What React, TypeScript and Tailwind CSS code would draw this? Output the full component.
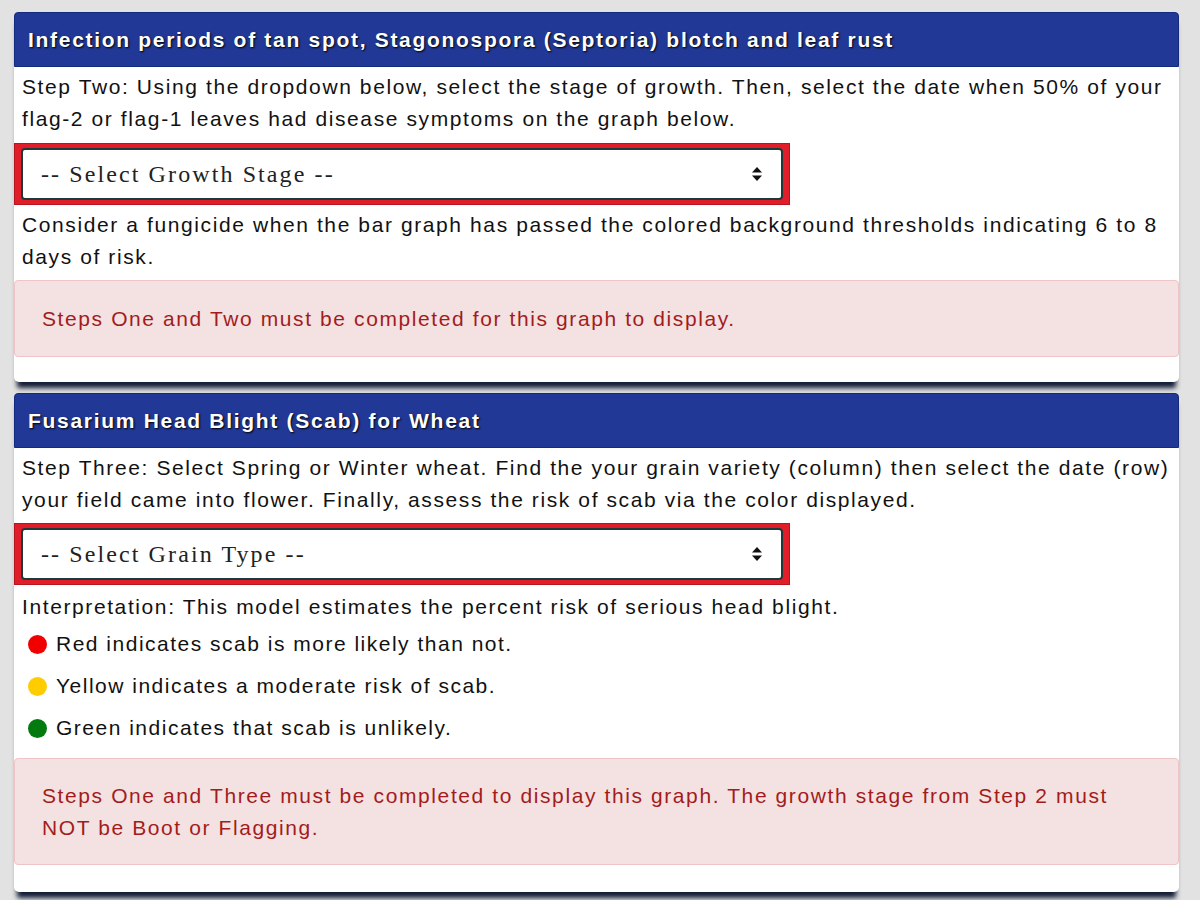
import React from "react";

function Arrows() {
  return (
    <svg width="12" height="16" viewBox="0 0 12 16" className="shrink-0">
      <path d="M6 1 L11 6.5 L1 6.5 Z" fill="#111" />
      <path d="M6 15 L11 9.5 L1 9.5 Z" fill="#111" />
    </svg>
  );
}

function SelectBox({ label }: { label: string }) {
  return (
    <div className="w-[776px] h-[62px] bg-[#e21d2a] border border-[#b5161f] px-[6px] py-[4px]">
      <div className="h-full bg-white border-2 border-[#1d3a3a] rounded-[4px] flex items-center justify-between pl-[18px] pr-[18px]">
        <span className="text-[24px] tracking-[2.1px] text-[#222] font-['Liberation_Serif',serif]">{label}</span>
        <Arrows />
      </div>
    </div>
  );
}

function Header({ title }: { title: string }) {
  return (
    <div className="h-[55px] bg-[#213896] border border-[#142a7e] rounded-t-[4px] flex items-center px-[13px]">
      <span className="text-white font-bold text-[21px] tracking-[1.7px] [text-shadow:1px_1px_2px_#000]">{title}</span>
    </div>
  );
}

function Alert({ children, h }: { children: React.ReactNode; h: string }) {
  return (
    <div className={`${h} bg-[#f4e1e2] border border-[#efc4c6] rounded-[4px] flex items-center px-[27px] text-[#a31c1c] text-[21px] tracking-[1.6px] leading-[32px]`}>
      <div className="max-w-[1115px]">{children}</div>
    </div>
  );
}

function Dot({ color }: { color: string }) {
  return <span className={`inline-block w-[19px] h-[19px] rounded-full ${color} mr-[9px] shrink-0`} />;
}

const bodyText = "text-[21px] leading-[32px] tracking-[1.6px]";

export default function App() {
  return (
    <div className="w-[1200px] h-[900px] bg-[#e2e2e2] overflow-hidden pt-[12px] font-['Liberation_Sans',Arial,sans-serif] text-[#111]">
      <div className="ml-[14px] w-[1165px] bg-white rounded-[5px] shadow-[0_9px_5px_-3px_rgba(8,18,45,0.95)] pb-[25px]">
        <Header title="Infection periods of tan spot, Stagonospora (Septoria) blotch and leaf rust" />
        <p className={`px-[8px] pt-[4px] ${bodyText}`}>
          Step Two: Using the dropdown below, select the stage of growth. Then, select the date when 50% of your flag-2 or flag-1 leaves had disease symptoms on the graph below.
        </p>
        <div className="mt-[8px]">
          <SelectBox label="-- Select Growth Stage --" />
        </div>
        <p className={`px-[8px] pt-[4px] ${bodyText}`}>
          Consider a fungicide when the bar graph has passed the colored background thresholds indicating 6 to 8 days of risk.
        </p>
        <div className="mt-[7px]">
          <Alert h="h-[77px]">Steps One and Two must be completed for this graph to display.</Alert>
        </div>
      </div>

      <div className="mt-[11px] ml-[14px] w-[1165px] bg-white rounded-[5px] shadow-[0_9px_5px_-3px_rgba(8,18,45,0.95)] pb-[27px]">
        <Header title="Fusarium Head Blight (Scab) for Wheat" />
        <p className={`px-[8px] pt-[4px] ${bodyText}`}>
          Step Three: Select Spring or Winter wheat. Find the your grain variety (column) then select the date (row) your field came into flower. Finally, assess the risk of scab via the color displayed.
        </p>
        <div className="mt-[7px]">
          <SelectBox label="-- Select Grain Type --" />
        </div>
        <p className={`px-[8px] pt-[6px] ${bodyText}`}>
          Interpretation: This model estimates the percent risk of serious head blight.
        </p>
        <div className="px-[14px] flex flex-col text-[21px] tracking-[1.5px]">
          <div className="h-[42px] flex items-center"><Dot color="bg-[#f20000]" />Red indicates scab is more likely than not.</div>
          <div className="h-[42px] flex items-center"><Dot color="bg-[#ffcc00]" />Yellow indicates a moderate risk of scab.</div>
          <div className="h-[42px] flex items-center"><Dot color="bg-[#027a0e]" />Green indicates that scab is unlikely.</div>
        </div>
        <div className="mt-[9px]">
          <Alert h="h-[107px]">
            Steps One and Three must be completed to display this graph. The growth stage from Step 2 must NOT be Boot or Flagging.
          </Alert>
        </div>
      </div>
    </div>
  );
}
